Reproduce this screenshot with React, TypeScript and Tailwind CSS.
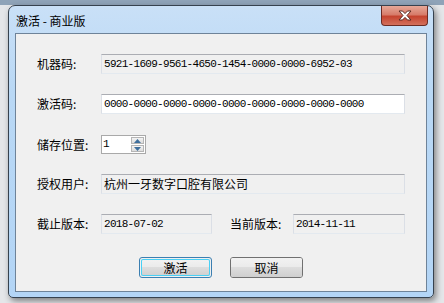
const cjk = "font-['Noto_Sans_CJK_SC','Noto_Sans',sans-serif]";
const mono = "font-['Liberation_Mono','DejaVu_Sans_Mono',monospace]";

function Label({ text, className = "" }: { text: string; className?: string }) {
  return (
    <span className={`${cjk} text-[12px] leading-[20px] text-black whitespace-nowrap ${className}`}>
      {text}
    </span>
  );
}

function Field({
  value,
  width,
  readOnly = true,
  cn = false,
}: {
  value: string;
  width: string;
  readOnly?: boolean;
  cn?: boolean;
}) {
  return (
    <div
      className={`${width} h-[20px] flex items-center pl-[2px] border border-t-[#abadb3] border-x-[#dbdfe6] border-b-[#e3e9ef] ${
        readOnly ? "bg-[#f0f0f0]" : "bg-white"
      }`}
    >
      <span
        className={
          cn
            ? `${cjk} text-[12px] leading-none text-black whitespace-nowrap`
            : `${mono} text-[11px] tracking-[-0.7px] leading-none text-black whitespace-nowrap`
        }
      >
        {value}
      </span>
    </div>
  );
}

function Spinner() {
  return (
    <div className="w-[45px] h-[19px] flex border border-[#a9a9a9] bg-white">
      <div className="flex-1 flex items-center pl-[1px]">
        <span className={`${mono} text-[11px] leading-none`}>1</span>
      </div>
      <div className="w-[15px] flex flex-col gap-[1px] p-[1px]">
        <div className="flex-1 flex items-center justify-center border border-[#b5b5b5] bg-gradient-to-b from-[#f4f4f4] to-[#dcdcdc]">
          <svg width="7" height="4" viewBox="0 0 7 4">
            <path d="M0 4 L3.5 0 L7 4 Z" fill="#3d6e9c" />
          </svg>
        </div>
        <div className="flex-1 flex items-center justify-center border border-[#b5b5b5] bg-gradient-to-b from-[#f4f4f4] to-[#dcdcdc]">
          <svg width="7" height="4" viewBox="0 0 7 4">
            <path d="M0 0 L7 0 L3.5 4 Z" fill="#3d6e9c" />
          </svg>
        </div>
      </div>
    </div>
  );
}

function Button({ text, primary = false }: { text: string; primary?: boolean }) {
  return (
    <div
      className={`w-[73px] h-[21px] rounded-[3px] border flex ${
        primary ? "border-[#3c7fb1] p-[1px]" : "border-[#707070]"
      }`}
    >
      <div
        className={`flex-1 rounded-[2px] flex items-center justify-center bg-[linear-gradient(to_bottom,#f2f2f2_0%,#ebebeb_45%,#dddddd_50%,#cfcfcf_100%)] ${
          primary ? "shadow-[inset_0_0_0_1px_#48d0f5]" : ""
        }`}
      >
        <span className={`${cjk} text-[12px] leading-none text-black`}>{text}</span>
      </div>
    </div>
  );
}

export default function App() {
  return (
    <div className="w-[444px] h-[303px] overflow-hidden bg-[#e4e6e9] bg-[linear-gradient(to_bottom,#8fa3b8_0px,#8fa3b8_5px,transparent_5px)] pt-[5px] pl-[8px]">
      <div className="w-[426px] h-[293px] flex flex-col rounded-t-[7px] rounded-b-[5px] border border-[#36424f] bg-[linear-gradient(to_bottom,#c9e0f7_0%,#b9d8f5_30%,#b3d5f6_100%)] shadow-[2px_3px_6px_rgba(0,0,0,0.45)]">
        <div className="h-[27px] flex items-start pl-[7px] pr-[5px]">
          <span className={`${cjk} text-[12px] leading-none mt-[9px] text-black`}>激活 - 商业版</span>
          <div className="ml-auto w-[47px] h-[20px] rounded-b-[4px] border border-t-0 border-[#6b2c24] bg-[linear-gradient(to_bottom,#e6a898_0%,#d77c6a_45%,#c5442f_55%,#d3705c_100%)] flex items-center justify-center">
            <svg width="14" height="11" viewBox="0 0 14 11">
              <path
                d="M1 1 L4.5 1 L7 3.6 L9.5 1 L13 1 L9 5.5 L13 10 L9.5 10 L7 7.4 L4.5 10 L1 10 L5 5.5 Z"
                fill="#ffffff"
                stroke="#5a2a22"
                strokeWidth="1"
                strokeLinejoin="round"
              />
            </svg>
          </div>
        </div>
        <div className="flex-1 mx-[6px] mb-[5px] border border-[#6e8399] bg-[#f0f0f0] pl-[21px] pr-[19px] pt-[20px] flex flex-col">
          <div className="flex items-center h-[20px]">
            <Label text="机器码:" className="w-[64px]" />
            <Field value="5921-1609-9561-4650-1454-0000-0000-6952-03" width="w-[304px]" />
          </div>
          <div className="flex items-center h-[20px] mt-[20px]">
            <Label text="激活码:" className="w-[64px]" />
            <Field value="0000-0000-0000-0000-0000-0000-0000-0000-0000" width="w-[304px]" readOnly={false} />
          </div>
          <div className="flex items-center h-[19px] mt-[21px]">
            <Label text="储存位置:" className="w-[64px]" />
            <Spinner />
          </div>
          <div className="flex items-center h-[20px] mt-[20px]">
            <Label text="授权用户:" className="w-[64px]" />
            <Field value="杭州一牙数字口腔有限公司" width="w-[304px]" cn />
          </div>
          <div className="flex items-center h-[20px] mt-[20px]">
            <Label text="截止版本:" className="w-[64px]" />
            <Field value="2018-07-02" width="w-[111px]" />
            <Label text="当前版本:" className="ml-[18px] w-[63px]" />
            <Field value="2014-11-11" width="w-[112px]" />
          </div>
          <div className="flex items-center gap-[18px] mt-[23px] pl-[102px]">
            <Button text="激活" primary />
            <Button text="取消" />
          </div>
        </div>
      </div>
    </div>
  );
}
